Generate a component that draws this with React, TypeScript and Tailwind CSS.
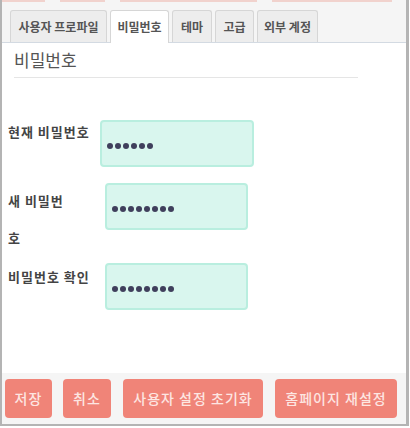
import React from "react"

const tabs = [
  { label: "사용자 프로파일", width: "w-[97px]" },
  { label: "비밀번호", width: "w-[59px]", active: true },
  { label: "테마", width: "w-[40px]" },
  { label: "고급", width: "w-[39px]" },
  { label: "외부 계정", width: "w-[61px]" },
]

function Dots({ count }: { count: number }) {
  return (
    <div className="flex gap-[2px]">
      {Array.from({ length: count }).map((_, i) => (
        <span key={i} className="h-[6px] w-[6px] rounded-full bg-[#3f3f5c]"></span>
      ))}
    </div>
  )
}

function PasswordBox({ width, count }: { width: string; count: number }) {
  return (
    <div
      className={`${width} flex h-[47px] shrink-0 items-center rounded-[4px] border-2 border-[#b9eedf] bg-[#d9f6ee] pl-[5px] pt-[5px]`}
    >
      <Dots count={count} />
    </div>
  )
}

export default function App() {
  return (
    <div className="h-[428px] w-[410px] bg-white font-['Noto_Sans_CJK_KR',sans-serif]">
      <div className="flex h-[426px] w-[409px] flex-col border-b-2 border-l-2 border-r-[3px] border-[#b4b4b4] bg-white">
        {/* leftover edge of the previous screen */}
        <div className="flex h-[2px] bg-[#f5f5f5]">
          <span className="w-[43px] bg-[#f1d2cd]"></span>
          <span className="ml-[15px] w-[45px] bg-[#f1d2cd]"></span>
          <span className="ml-[15px] w-[137px] bg-[#f1d2cd]"></span>
          <span className="ml-[15px] w-[120px] bg-[#f1d2cd]"></span>
        </div>

        <div className="flex items-end gap-[3px] border-b border-[#d3dae2] bg-[#f5f5f5] px-[8px] pt-[8px]">
          {tabs.map((tab) => (
            <div
              key={tab.label}
              className={`${tab.width} flex items-center justify-center rounded-t-[3px] border border-b-0 border-[#d6d6d6] text-[12px] font-bold text-[#555] ${
                tab.active ? "relative -mb-px h-[33px] bg-white" : "h-[32px] bg-[#ededed]"
              }`}
            >
              {tab.label}
            </div>
          ))}
        </div>

        <div className="ml-[12px] mt-[5px]">
          <h2 className="text-[17px] leading-[24px] text-[#555]">비밀번호</h2>
          <div className="mt-[5px] h-px w-[344px] bg-[#e5e5e5]"></div>
        </div>

        <div className="mt-[42px] flex flex-col text-[13px] font-bold tracking-[1px] text-[#444]">
          <div className="flex h-[63px] items-start">
            <label className="ml-[6px] w-[92px] pt-[2px] leading-[20px]">현재 비밀번호</label>
            <PasswordBox width="w-[154px]" count={6} />
          </div>
          <div className="flex h-[80px] items-start">
            <label className="-mt-px ml-[6px] mr-[35px] w-[62px] leading-[37px]">새 비밀번호</label>
            <PasswordBox width="w-[143px]" count={8} />
          </div>
          <div className="flex items-start">
            <label className="ml-[6px] w-[97px] pt-[4px] leading-[20px]">비밀번호 확인</label>
            <PasswordBox width="w-[143px]" count={8} />
          </div>
        </div>

        <div className="mt-auto flex h-[51px] items-start bg-[#f5f5f5] pl-[3px] pt-[6px] text-[14px] font-medium tracking-[1px] text-[#fde6e2]">
          <button className="h-[39px] w-[47px] rounded-[4px] bg-[#f08478]">저장</button>
          <button className="ml-[11px] h-[39px] w-[48px] rounded-[4px] bg-[#f08478]">취소</button>
          <button className="ml-[12px] h-[39px] w-[140px] rounded-[4px] bg-[#f08478]">사용자 설정 초기화</button>
          <button className="ml-[12px] h-[39px] w-[122px] rounded-[4px] bg-[#f08478]">홈페이지 재설정</button>
        </div>
      </div>
    </div>
  )
}
